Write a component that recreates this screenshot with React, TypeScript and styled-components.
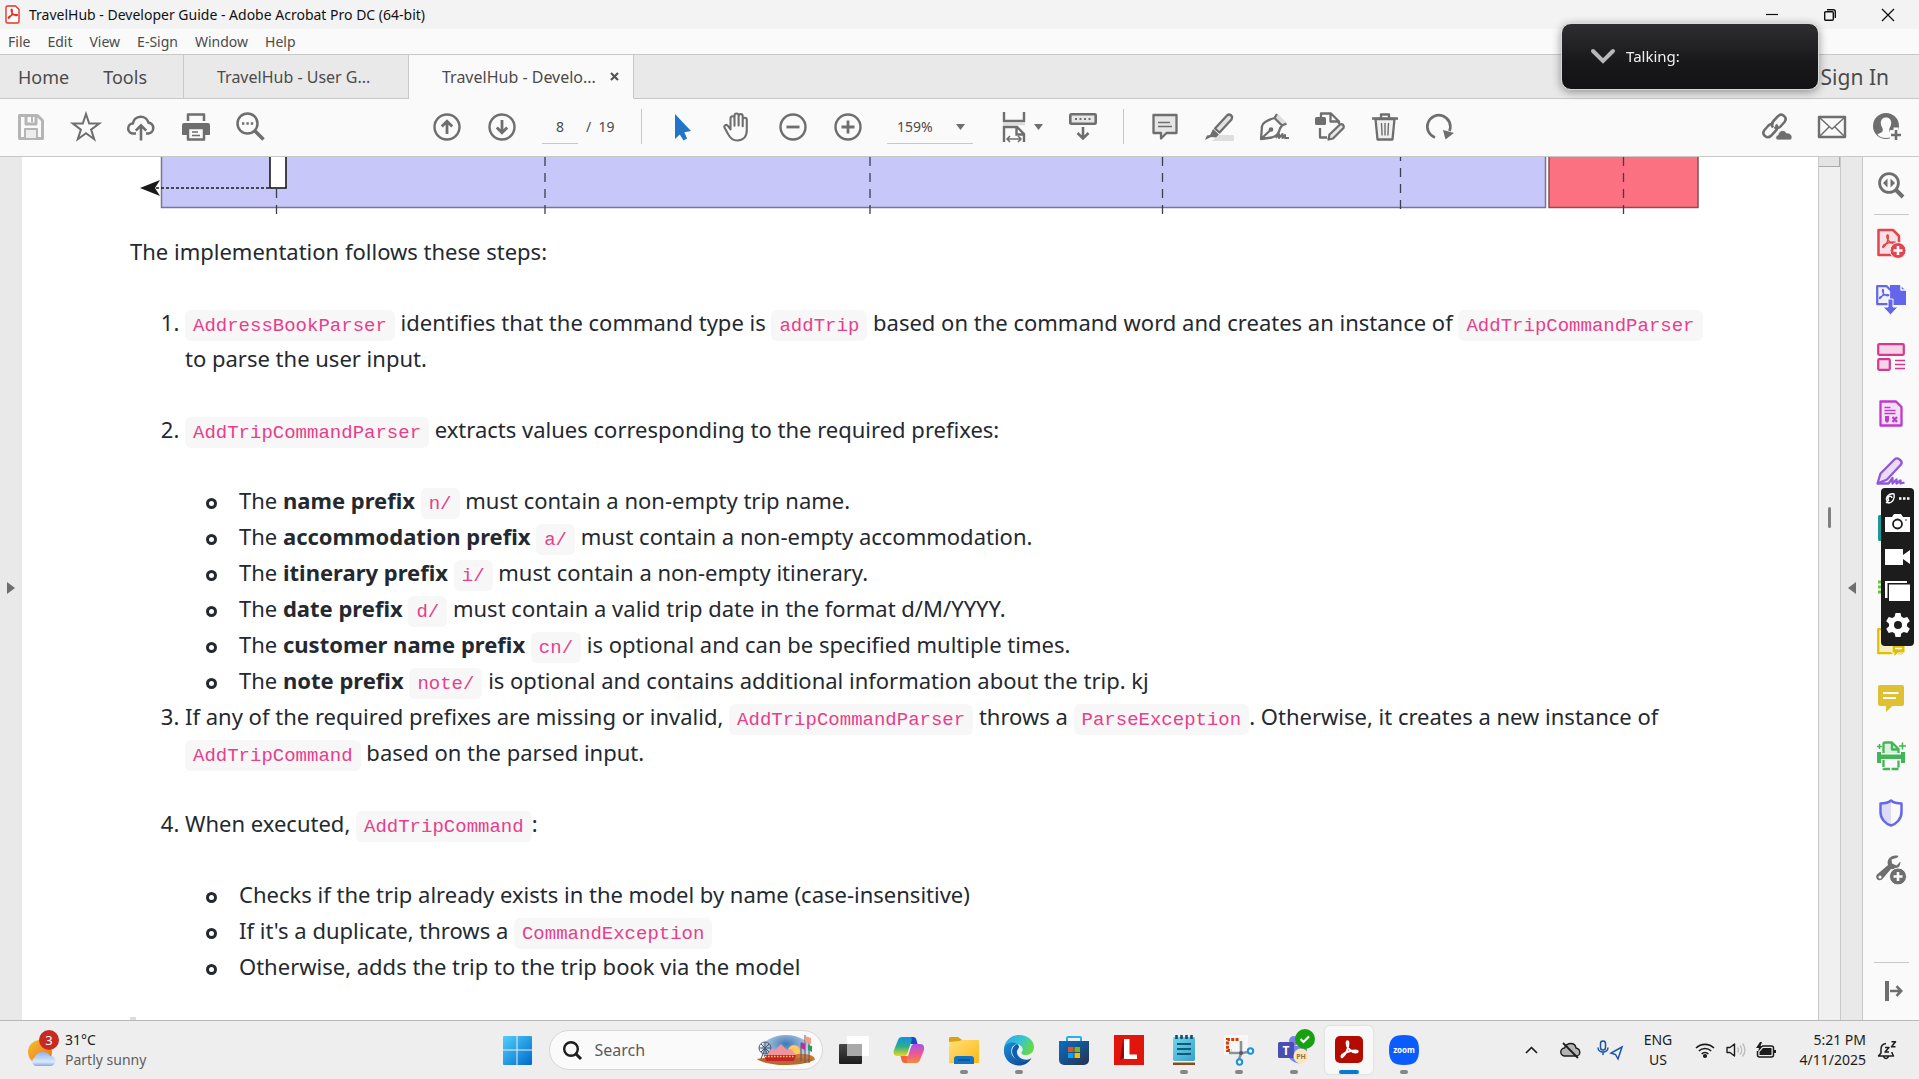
import React from 'react';
import styled, { createGlobalStyle } from 'styled-components';

const GlobalStyle = createGlobalStyle`
  *, *::before { box-sizing: border-box; }
  html, body { margin: 0; height: 100%; overflow: hidden; }
  body { font-family: 'Noto Sans', 'Open Sans', sans-serif; color: #4b4b4b; background: #fff; }
  button, input, select { font: inherit; color: inherit; border: 0; background: none; padding: 0; margin: 0; outline: 0; }
  svg { display: block; flex: none; overflow: visible; }
`;

const LINE = '#c8c8c8';
const INK = '#6e6e6e';

/* ---------- shell ---------- */
const Window = styled.div`
  display: flex;
  flex-direction: column;
  height: 100vh;
`;

const TitleBar = styled.header`
  display: flex;
  align-items: center;
  height: 29px;
  flex: none;
  padding: 0 2px 0 5px;
  gap: 9px;
  background: #f3f3f3;
  color: #111;
  font-size: 14px;
`;
const Title = styled.h1`
  flex: 1;
  margin: 0;
  font-size: 14px;
  font-weight: 400;
`;
const WindowControls = styled.div`
  display: flex;
`;
const WindowButton = styled.button`
  display: flex;
  align-items: center;
  justify-content: center;
  width: 58px;
  height: 29px;
`;

const MenuBar = styled.nav`
  display: flex;
  align-items: center;
  height: 25px;
  flex: none;
  padding-left: 8px;
  gap: 17px;
  background: #fafafa;
  font-size: 14px;
`;

const TabBar = styled.div`
  display: flex;
  height: 45px;
  flex: none;
  border-top: 1px solid ${LINE};
  background: #e9e9e9;
`;
const HomeTabs = styled.div`
  display: flex;
  align-items: center;
  width: 184px;
  padding-left: 18px;
  gap: 34px;
  font-size: 18px;
  border-right: 1px solid ${LINE};
  border-bottom: 1px solid ${LINE};
`;
const DocTab = styled.div<{ $active?: boolean }>`
  display: flex;
  align-items: center;
  gap: 14px;
  width: 225px;
  padding-left: 33px;
  font-size: 16px;
  border-right: 1px solid ${LINE};
  border-bottom: 1px solid ${p => (p.$active ? '#fafafa' : LINE)};
  background: ${p => (p.$active ? '#fafafa' : 'transparent')};
`;
const TabRest = styled.div`
  display: flex;
  flex: 1;
  align-items: center;
  justify-content: flex-end;
  padding-right: 30px;
  font-size: 21px;
  border-bottom: 1px solid ${LINE};
`;

const ToolBar = styled.div`
  display: flex;
  align-items: center;
  height: 58px;
  flex: none;
  padding: 0 5px 2px 3px;
  background: #fafafa;
  border-bottom: 1px solid ${LINE};
  font-size: 14px;
`;
const ToolButton = styled.button<{ $wide?: boolean }>`
  display: flex;
  align-items: center;
  justify-content: center;
  gap: 8px;
  width: ${p => (p.$wide ? 66 : 55)}px;
  height: 54px;
  color: ${INK};
`;
const ToolSpace = styled.div<{ $grow: number }>`
  flex: ${p => p.$grow};
`;
const Separator = styled.div`
  width: 1px;
  height: 35px;
  margin: 0 13px;
  background: ${LINE};
`;
const PageField = styled.label`
  display: flex;
  align-items: center;
  gap: 8px;
  margin-left: 13px;
  width: 86px;
`;
const PageInput = styled.input`
  width: 36px;
  height: 35px;
  text-align: center;
  border-bottom: 1px solid ${LINE};
`;
const ZoomField = styled.label`
  position: relative;
  margin: 0 16px 0 12px;
`;
const ZoomSelect = styled.select`
  appearance: none;
  width: 86px;
  height: 35px;
  padding-left: 10px;
  border-bottom: 1px solid ${LINE};
  border-radius: 0;
`;
const CaretOver = styled.span`
  position: absolute;
  right: 8px;
  top: 15px;
`;

/* ---------- document ---------- */
const Body = styled.div`
  position: relative;
  display: flex;
  flex: 1;
  min-height: 0;
`;
const EdgeStrip = styled.button<{ $left?: boolean }>`
  display: flex;
  align-items: center;
  justify-content: center;
  width: 22px;
  background: #e9e9e9;
  border-left: ${p => (p.$left ? 0 : 1)}px solid ${LINE};
  color: ${INK};
  padding-bottom: 2px;
`;
const Page = styled.main`
  flex: 1;
  min-width: 0;
  overflow: hidden;
  background: #fff;
  color: #24292f;
  font-size: 22px;
  line-height: 36px;
`;
const Diagram = styled.svg`
  margin-left: 116px;
`;
const Prose = styled.article`
  padding: 19px 100px 0 108px;
  p { margin: 0; }
`;
const Steps = styled.ol`
  margin: 0;
  padding-left: 55px;
  list-style: decimal;
`;
const Step = styled.li<{ $tight?: boolean }>`
  margin-top: ${p => (p.$tight ? 0 : 35)}px;
`;
const SubList = styled.ul`
  margin: 35px 0 0;
  padding-left: 54px;
  list-style: none;
`;
const SubItem = styled.li`
  &::before {
    content: '';
    display: inline-block;
    width: 11px;
    height: 11px;
    margin: 0 22px 0 -33px;
    border: 3px solid #24292f;
    border-radius: 50%;
  }
`;
const Code = styled.code`
  padding: 5px 8px 4px;
  border-radius: 6px;
  background: #f7f7f7;
  color: #e83e8c;
  font-family: 'Liberation Mono', monospace;
  font-size: 19px;
  line-height: 1;
`;
const NextMark = styled.div`
  width: 6px;
  height: 3px;
  margin-top: 33px;
  background: #dcdcdc;
`;
const ScrollBar = styled.div`
  display: flex;
  flex-direction: column;
  align-items: center;
  width: 22px;
  background: #f0f0f0;
  border-left: 1px solid ${LINE};
`;
const ScrollThumb = styled.div`
  align-self: stretch;
  height: 10px;
  background: #e4e4e4;
  border-right: 1px solid #aaa;
  border-bottom: 1px solid #aaa;
`;
const ScrollGrip = styled.div`
  width: 3px;
  height: 21px;
  margin-top: 340px;
  border-radius: 2px;
  background: #808080;
`;
const SideBar = styled.aside`
  display: flex;
  flex-direction: column;
  align-items: center;
  width: 57px;
  background: #fafafa;
  border-left: 1px solid ${LINE};
`;
const SideButton = styled.button`
  display: flex;
  align-items: center;
  justify-content: center;
  width: 56px;
  height: 57px;
  flex: none;
  padding-bottom: 2px;
  color: ${INK};
`;
const SideRule = styled.div<{ $push?: boolean }>`
  width: 35px;
  height: 1px;
  margin-top: ${p => (p.$push ? 'auto' : 0)};
  background: ${LINE};
`;

/* ---------- floating windows ---------- */
const Recorder = styled.div`
  position: absolute;
  top: 331px;
  right: 5px;
  width: 33px;
  height: 158px;
  display: flex;
  flex-direction: column;
  align-items: center;
  gap: 2px;
  padding-top: 3px;
  border-radius: 4px;
  background: #1c1c1c;
  color: #fff;
`;
const RecorderButton = styled.button<{ $small?: boolean }>`
  display: flex;
  align-items: center;
  justify-content: center;
  width: 33px;
  height: ${p => (p.$small ? 14 : 32)}px;
`;
const Talking = styled.div`
  position: fixed;
  top: 23px;
  right: 100px;
  display: flex;
  align-items: center;
  gap: 11px;
  width: 258px;
  height: 67px;
  padding: 0 0 1px 29px;
  border: 1px solid #d8d8d8;
  border-radius: 10px;
  background: linear-gradient(#2e2e30, #18181a 60%, #131315);
  box-shadow: 0 2px 10px rgba(0, 0, 0, 0.4);
  color: #eee;
  font-size: 15px;
`;

/* ---------- taskbar ---------- */
const TaskBar = styled.footer`
  display: grid;
  grid-template-columns: 1fr auto 1fr;
  align-items: center;
  height: 59px;
  flex: none;
  padding-left: 2px;
  border-top: 1px solid #b8b8b8;
  background: #eee;
  color: #1c1c1c;
  font-size: 14px;
  line-height: 20px;
`;
const Weather = styled.button`
  display: flex;
  align-items: center;
  gap: 6px;
  padding-left: 26px;
  text-align: left;
  small { display: block; font-size: 14px; color: #5e5e5e; }
`;
const Apps = styled.div`
  display: flex;
  align-items: center;
  gap: 7px;
`;
const AppButton = styled.button<{ $active?: boolean }>`
  display: flex;
  flex-direction: column;
  align-items: center;
  justify-content: flex-end;
  gap: 4px;
  width: 48px;
  height: 48px;
  border-radius: 5px;
  background: ${p => (p.$active ? '#f8f8f8' : 'transparent')};
  box-shadow: ${p => (p.$active ? '0 0 1px 1px #e2e2e2' : 'none')};
`;
const Indicator = styled.span<{ $state?: 'open' | 'active' }>`
  width: ${p => (p.$state === 'active' ? 20 : 8)}px;
  height: 4px;
  border-radius: 2px;
  background: ${p => (p.$state === 'active' ? '#0a78d4' : p.$state === 'open' ? '#868686' : 'transparent')};
`;
const SearchBox = styled.label`
  display: flex;
  align-items: center;
  gap: 13px;
  width: 274px;
  height: 40px;
  padding: 0 7px 0 13px;
  border: 1px solid #d6d6d6;
  border-radius: 20px;
  background: #fafafa;
`;
const SearchInput = styled.input`
  flex: 1;
  min-width: 0;
  font-size: 16px;
  &::placeholder { color: #5a5a5a; opacity: 1; }
`;
const Tray = styled.div`
  display: flex;
  align-items: center;
  justify-content: flex-end;
  padding-right: 22px;
`;
const TrayButton = styled.button<{ $w: number; $align?: 'right' }>`
  display: flex;
  flex-direction: column;
  align-items: ${p => (p.$align ? 'flex-end' : 'center')};
  width: ${p => p.$w}px;
`;

/* ---------- icons ---------- */
type IconProps = { w: number; h?: number; sw?: number; color?: string; fill?: string; children: React.ReactNode };
const Icon = ({ w, h = w, sw = 2, color = 'currentColor', fill = 'none', children }: IconProps) => (
  <svg width={w} height={h} viewBox={`0 0 ${w} ${h}`} fill={fill} stroke={color} strokeWidth={sw} strokeLinejoin="round" aria-hidden="true">
    {children}
  </svg>
);
const Caret = () => <Icon w={9} h={6} sw={0} fill={INK}><path d="M0 0h9L4.500 6z" /></Icon>;
const ACRO = 'M7.500 21C10 19 13 13 13 8c0-3-2-3-2 0 0 4 5 9 9 9 3 0 3-2 0-2-4 0-10 2-13 4-2 2-1 4 .5 2z';

const SaveIcon = () => (
  <Icon w={28} color="#b5b5b5" sw={3}>
    <path d="M2.500 2.500h18l5 5v18h-23z" /><path d="M9 3v8h10V3" /><path d="M15 4v5" strokeWidth="2" /><path d="M8 25v-9h12v9" fill="#ececec" strokeWidth="2" />
  </Icon>
);
const StarIcon = () => <Icon w={30}><path d="M15 2l3.200 9.600h10l-8.100 6 3.100 9.600L15 21.300 6.800 27.200l3.100-9.600-8.100-6h10z" strokeLinejoin="miter" /></Icon>;
const UploadIcon = () => (
  <Icon w={28} sw={2.600}><path d="M9 20.500H6.500a5 5 0 0 1-.6-10A8 8 0 0 1 21.500 9.600a5.500 5.500 0 0 1 0 10.900H19" /><path d="M14 27.500V12.500M8.800 17.600l5.200-5.200 5.200 5.200" strokeLinejoin="miter" /></Icon>
);
const PrintIcon = () => (
  <Icon w={28}>
    <path d="M6 8V1.500h16V8" strokeWidth="2.500" /><path d="M2 10h24a2 2 0 0 1 2 2v10H0V12a2 2 0 0 1 2-2z" fill={INK} stroke="none" /><path d="M6 15h16v11.500H6z" fill="#fafafa" strokeWidth="2.500" /><path d="M10 19h6M10 22.500h8" strokeWidth="1.500" />
  </Icon>
);
const FindIcon = () => (
  <Icon w={29} sw={2.500}><circle cx="11.500" cy="11.500" r="10" /><path d="M19 19l8.500 8.500" strokeWidth="3.500" /><path d="M6 11.500h2.400M10.400 11.500h2.400M14.800 11.500h2.400" strokeWidth="2.400" /></Icon>
);
const Round = ({ d }: { d: string }) => <Icon w={28} sw={2.400}><circle cx="14" cy="14" r="12.500" /><path d={d} strokeWidth="2.800" strokeLinejoin="miter" /></Icon>;
const PointerIcon = () => <Icon w={16} h={26} sw={0} fill="#2174c8"><path d="M0 0v25l4.800-4.500 3.700 6 3.600-2-2.800-6.300 6.700-1.200z" /></Icon>;
const HandIcon = () => (
  <Icon w={29} h={30} sw={2.100}>
    <path d="M7.500 17.500V6.200a2 2 0 0 1 4 0v7.500V3.500a2 2 0 0 1 4.100 0v10V4.200a2 2 0 0 1 4.100 0v10V7.800a2 2 0 0 1 4.100 0V18c0 7-4 10.500-9.500 10.500-5 0-7.300-2.400-9.300-6.600L1.500 15.500c-.8-2.200 2-3.600 3.500-1.500z" />
  </Icon>
);
const FitIcon = () => (
  <Icon w={24} h={30} sw={2.400}>
    <path d="M2 0v9h20V0" strokeLinejoin="miter" /><path d="M1 12h22" stroke="#dcdcdc" /><path d="M2 30V15h13l7 7v8M14.500 15v7.500H22" strokeLinejoin="miter" /><path d="M5 27h14M8 24l-3 3 3 3M16 24l3 3-3 3" strokeWidth="1.600" />
  </Icon>
);
const KeysIcon = () => (
  <Icon w={28} h={27} sw={2.600}><rect x="1.300" y="1.300" width="25.400" height="9.400" rx="1" fill="#e6e6e6" /><path d="M6 6h2M10.500 6h2M15 6h2M19.500 6h2" strokeWidth="2" /><path d="M14 14v11M8.500 20l5.500 5.500 5.500-5.500" strokeLinejoin="miter" /></Icon>
);
const NoteIcon = () => (
  <Icon w={26} h={27} sw={2.300}><path d="M1.500 2h23v18H14.500L9 25.500V20H1.500z" fill="#e6e6e6" /><path d="M6 9.500h12M6 13.500h14" strokeWidth="1.600" /></Icon>
);
const MarkerIcon = () => (
  <Icon w={29} h={28} sw={2.300}><path d="M14 22h15v6H7z" fill="#dedede" stroke="none" /><path d="M10 15.500L22 2.500c2.500-2.500 6.500.5 4.500 4L14.500 19.500z" fill="#e2e2e2" /><path d="M8 16l6 5.500-3 3-5-.5-6 3 2-4.500 3-.5z" fill={INK} stroke="none" /></Icon>
);
const SignIcon = () => (
  <Icon w={29} h={28} sw={2.300}>
    <path d="M15 5l3.500-3.500L26 9l-3.500 3.500z" fill="#dedede" stroke="none" /><path d="M17 1l-2.500 4 7.500 7.500 4.500-2M14.500 5C8 7 3 9.500 2 13l-1 13 11-1.500c4-1 7-4 8-9l2-3M1 26l9-8.500" /><circle cx="11" cy="16.500" r="1.200" /><path d="M16 25l3-4v4l3.500-4v4l2.500-3v3h4" strokeWidth="2" />
  </Icon>
);
const EditPdfIcon = () => (
  <Icon w={30} h={29} sw={2.300}>
    <path d="M6 5V1.500h10l8 8V12M15.500 2v7.500H23M5 16v9.500h7" /><rect x="0" y="5" width="11" height="8" rx="1.500" fill={INK} stroke="none" /><path d="M13.500 27.500l1-5L25 12.500c2.500-1 4.500 1 3.500 3.500L18 26.500z" fill="#e6e6e6" />
  </Icon>
);
const TrashIcon = () => (
  <Icon w={26} h={28} sw={2.300}><path d="M3.500 6l2 20.500h15l2-20.500z" fill="#f0f0f0" /><path d="M0 5.500h26M9 5V1.500h8V5" /><path d="M9.500 10l.6 12.500M13 10v12.500M16.500 10l-.6 12.500" strokeWidth="1.400" /></Icon>
);
const RotateIcon = () => <Icon w={28} h={26} sw={2.700}><path d="M9 23.500A11.500 11.500 0 1 1 23.500 17" /><path d="M17 16l11 3-8.500 6.500z" fill={INK} stroke="none" /></Icon>;
const LinkIcon = () => (
  <Icon w={30} h={28} sw={2.600}>
    <path d="M11 14.500c-2-2.500-1.500-4.500.5-6.500l4.500-4.800c4-3.800 10 1.200 6.500 5.800l-4 4.500c-1.800 2-4.500 2-6 .5" /><path d="M14 11.500c2 2.500 1.500 4.500-.5 6.500L9 22.800C5 26.500-1 21.500 2.500 17l4-4.500c1.500-1.600 3.500-1.800 5-1" /><path d="M16 27c-3 0-3-4.500 0-5 .5-5 7-6 8.500-2 3-.5 6 2 5.500 5l-1 2z" fill={INK} stroke="#fafafa" strokeWidth=".8" />
  </Icon>
);
const MailIcon = () => <Icon w={28} h={22} sw={2}><rect x="1" y="1" width="26" height="20" strokeWidth="2.400" /><path d="M2 2l12 11L26 2M2 20l9.500-9.500M26 20l-9.500-9.500" strokeWidth="1.500" /></Icon>;
const UserIcon = () => (
  <Icon w={28} h={27} sw={0}>
    <circle cx="13" cy="13" r="13" fill={INK} />
    <path d="M13 4.500c3.600 0 5.500 2.700 5.200 6-.2 2.500-1.400 4-1.900 5.200-.3 2.300.2 3.300 2 4.100 1.200.5 2.500 1 3.200 1.900A12 12 0 0 1 13 25a12 12 0 0 1-8.500-3.300c.7-.9 2-1.400 3.200-1.900 1.800-.8 2.300-1.800 2-4.100-.5-1.200-1.700-2.700-1.900-5.200-.3-3.300 1.600-6 5.200-6z" fill="#fafafa" />
    <path d="M17 17h3.500v-2.500h5V17H28v10H17z" fill="#fafafa" /><path d="M23 17v10M18 22h10" stroke={INK} strokeWidth="2.600" />
  </Icon>
);

const ZoomSide = () => <Icon w={26} sw={2.800}><circle cx="11" cy="11" r="9.400" /><path d="M18 18l7 7" strokeWidth="4" /><path d="M9.500 6.500v9L5 11zM12.500 6.500v9L17 11z" fill={INK} stroke="none" /></Icon>;
const CreatePdf = () => (
  <Icon w={30} sw={2.500} color="#e3444f"><path d="M2.500 2h14.500l6 6v19H2.500z" fill="#f8e1e3" /><g transform="translate(2 2) scale(.8)"><path d={ACRO} strokeWidth="1.800" /></g><circle cx="22" cy="22.500" r="8" fill="#e3444f" stroke="#fafafa" strokeWidth="1" /><path d="M22 18v9M17.500 22.500h9" stroke="#fff" strokeWidth="2.600" /></Icon>
);
const ExportPdf = () => (
  <Icon w={30} sw={2.200} color="#6366ea"><path d="M14 0h10l6 6v14H14z" fill="#6366ea" stroke="none" /><path d="M25 0v5h5" stroke="#fafafa" strokeWidth="1.500" /><path d="M1.200 1.200h9.500l4.500 4.500v13.500h-14z" fill="#f1f1fc" /><g transform="translate(0 1) scale(.58)"><path d={ACRO} strokeWidth="2" /></g><path d="M12 14h5v8h5l-7.500 8L7 22h5z" fill="#6366ea" stroke="#fafafa" strokeWidth="1" /></Icon>
);
const OrganizeIcon = () => (
  <Icon w={28} color="#d83790" sw={2.200}><rect x="1.200" y="1.200" width="25.600" height="10.600" rx="1" fill="#f4d4e6" /><rect x="1.200" y="16.200" width="11.600" height="10.600" rx="1" fill="#f4d4e6" /><path d="M18 17.500h10M18 21.500h10M18 25.500h10" strokeWidth="1.300" /></Icon>
);
const RedactIcon = () => (
  <Icon w={24} h={27} color="#c038cc" sw={2.300}><path d="M1.500 1.500h15.500l5.500 5.500v18.500h-21z" fill="#f4e0f6" /><path d="M5.500 7.500h6M5.500 10.500h11M5.500 13.500h11" strokeWidth="1.400" /><path d="M6 16h4v5l-2 2-2-2z" fill="#c038cc" stroke="none" /><path d="M13.500 17l4.500 5M18 17l-4.500 5" /></Icon>
);
const FillSign = () => (
  <Icon w={30} h={28} color="#9256d9" sw={2.300}><path d="M4.500 16.500L18.500 2.500c3-3 9 1.500 6.500 5L11 22.500 1.500 26.500z" fill="#e9dcf7" /><path d="M1.500 26.500h11l4-5.500v5.500l4-4v4l4-3v3l4-1" /></Icon>
);
const TealIcon = () => <Icon w={26} color="#189a9a" sw={3}><rect x="1.500" y="1.500" width="23" height="23" fill="#d7efef" /></Icon>;
const LimeIcon = () => <Icon w={26} color="#6cc42e" sw={3}><path d="M5 0v26M0 10h6M0 15h6M0 20h6" /></Icon>;
const SendNote = () => (
  <Icon w={28} color="#dfc000" sw={2.200}><path d="M1.200 1.200h24v24h-24z" fill="#f6ecc4" /><path d="M15 13h13v12h-7l-4 4v-4h-2z" fill="#dfc000" stroke="#fafafa" strokeWidth="1" /><path d="M18 20.500h7" stroke="#fff" strokeWidth="1.500" /></Icon>
);
const CommentSide = () => <Icon w={26} h={27} sw={0}><path d="M2 0h22a2 2 0 0 1 2 2v17a2 2 0 0 1-2 2H14.500L8 27v-6H2a2 2 0 0 1-2-2V2a2 2 0 0 1 2-2z" fill="#dfc033" /><path d="M5 8h15.500M5 13h13" stroke="#fff" strokeWidth="2.200" /></Icon>;
const ScanIcon = () => (
  <Icon w={28} h={30} color="#44b556" sw={2.300}><path d="M6.500 12V3c0-1 .5-1.500 1.500-1.500h7l6.500 6.500v4" fill="#d8f0dc" /><path d="M15 2v6.500h6" /><path d="M0 11h4v2.500h20V11h4v11h-4v-4H4v4H0z" fill="#44b556" stroke="none" /><path d="M6.500 19v9h15v-9" strokeDasharray="7 1.500" /><path d="M2.500 3v5M0 5.500h5M25.500 1.500v7M22 5h7" strokeWidth="1.500" /></Icon>
);
const ShieldIcon = () => <Icon w={24} h={28} color="#6568ea" sw={2.500}><path d="M12 2v24C5 23 2 18 2 12V5c4 0 7-1 10-3z" fill="#dcdcf6" stroke="none" /><path d="M12 1.500C9 4 5 4.500 1.500 4.500V13c0 7 5 12 10.500 13.500C17.500 25 22.500 20 22.500 13V4.500C19 4.500 15 4 12 1.500z" /></Icon>;
const MoreTools = () => (
  <Icon w={30} sw={0}>
    <path d="M22.500 1C16-1 10 4 12 10L1 19.500C-1.500 23 2.500 27 6 24.500L15 14c5 1.500 9.500-1.500 9.500-7.500l-4 4-4.500-2-.5-4 6-2zM4 20.500a1.600 1.600 0 1 1 0 3.200 1.600 1.600 0 0 1 0-3.200z" fill={INK} fillRule="evenodd" /><circle cx="22" cy="21.500" r="8.500" fill={INK} stroke="#fafafa" strokeWidth="1" /><path d="M22 17v9M17.500 21.500h9" stroke="#fafafa" strokeWidth="2.600" />
  </Icon>
);
const OpenPane = () => <Icon w={24} h={20} sw={2.600}><path d="M8 0v20" strokeWidth="4" /><path d="M11 10h11M17.500 5.200L22.200 10l-4.700 4.800" strokeLinejoin="miter" /></Icon>;

/* ---------- content ---------- */
const menus = ['File', 'Edit', 'View', 'E-Sign', 'Window', 'Help'];
const sideTools: [string, React.ReactNode][] = [
  ['Create PDF', <CreatePdf />], ['Export PDF', <ExportPdf />], ['Organize Pages', <OrganizeIcon />], ['Redact', <RedactIcon />],
  ['Fill & Sign', <FillSign />], ['Edit PDF', <TealIcon />], ['Compress', <LimeIcon />], ['Send for Comments', <SendNote />],
  ['Comment', <CommentSide />], ['Scan & OCR', <ScanIcon />], ['Protect', <ShieldIcon />], ['More Tools', <MoreTools />],
];
const prefixes: [string, string, string][] = [
  ['name prefix', 'n/', 'must contain a non-empty trip name.'],
  ['accommodation prefix', 'a/', 'must contain a non-empty accommodation.'],
  ['itinerary prefix', 'i/', 'must contain a non-empty itinerary.'],
  ['date prefix', 'd/', 'must contain a valid trip date in the format d/M/YYYY.'],
  ['customer name prefix', 'cn/', 'is optional and can be specified multiple times.'],
  ['note prefix', 'note/', 'is optional and contains additional information about the trip. kj'],
];

const SequenceDiagram = () => (
  <Diagram width="1562" height="57" viewBox="138 0 1562 57" fill="none" aria-hidden="true">
    <path d="M161.500 -2V50.500H1545.500V-2" fill="#c8c7fa" stroke="#77768f" strokeWidth="1.500" />
    <path d="M1549 -2V50.500H1698V-2" fill="#fb7181" stroke="#8c4d56" strokeWidth="1.500" />
    <g stroke="#3e3d50" strokeWidth="1.300" strokeDasharray="9 7">
      <path d="M545 0V57M870 0V57M1162.500 0V57M1623.500 0V57" /><path d="M1400.500 -5V53" /><path d="M276.500 32V57" />
    </g>
    <rect x="270" y="-4" width="16" height="35" fill="#fff" stroke="#1a1a1a" strokeWidth="1.600" />
    <path d="M156 31H270" stroke="#1a1a1a" strokeWidth="1.600" strokeDasharray="3 2" />
    <path d="M140 31l20-8-5 8 5 8z" fill="#1a1a1a" />
  </Diagram>
);

const WeatherArt = () => (
  <svg width="31" height="38" viewBox="0 0 31 38" aria-hidden="true">
    <defs>
      <linearGradient id="sun" x1="0" y1="0" x2="1" y2="1"><stop offset="0" stopColor="#f2c230" /><stop offset="1" stopColor="#ef6c12" /></linearGradient>
      <linearGradient id="cloud" x1="0" y1="0" x2="0" y2="1"><stop offset="0" stopColor="#8fb2f0" /><stop offset=".7" stopColor="#dbe9fb" /><stop offset="1" stopColor="#86a8ea" /></linearGradient>
    </defs>
    <circle cx="12" cy="21" r="12" fill="url(#sun)" />
    <path d="M7 35a5 5 0 0 1 0-9c1-6 13-7 15-1 7-1 7 10 0 10z" fill="url(#cloud)" />
    <circle cx="21" cy="9" r="10" fill="#c62a20" />
    <text x="21" y="14" textAnchor="middle" fontSize="13" fill="#fff">3</text>
  </svg>
);

const Carnival = () => (
  <svg width="58" height="30" viewBox="0 0 58 30" aria-hidden="true">
    <defs>
      <radialGradient id="sky" cx=".5" cy=".3" r=".7"><stop offset="0" stopColor="#3f78b4" /><stop offset=".6" stopColor="#a9c6e2" /><stop offset="1" stopColor="#fafafa" /></radialGradient>
    </defs>
    <ellipse cx="29" cy="15" rx="25" ry="15" fill="url(#sky)" />
    <circle cx="37" cy="16" r="6" fill="#ffc95c" />
    <path d="M30 24c7-6 19-7 27-2l1 3-10 3H30z" fill="#c77a38" />
    <path d="M0 24c6-2 46-2 56 1-4 4-20 5-28 5S4 28 0 24z" fill="#b8692e" />
    <g stroke="#4a5a70" strokeWidth="1" fill="none"><circle cx="8" cy="13" r="6" /><path d="M2 13h12M8 7v12M4 9l8 8M12 9l-8 8M8 13l-4 11M8 13l4 11" /></g>
    <path d="M10 20l4-6 4 1 6-6 6 6 4-1 5 6z" fill="#f2929c" /><path d="M7 20h32l-2 6H9z" fill="#c8222c" /><path d="M8 21.500h30" stroke="#ffcf5a" strokeWidth="1.500" strokeDasharray="1.500 1.500" />
    <path d="M48 0v28M52 8v20M44 8v18" stroke="#6a5060" strokeWidth="1" /><path d="M48 1l6 2v6l-6-2z" fill="#f0a07c" /><path d="M44 7l4 2v6l-4-2z" fill="#c52b9a" /><path d="M51 10l4 1v6l-4-2z" fill="#2a9a68" />
  </svg>
);

const art: Record<string, React.ReactNode> = {
  Start: (
    <><defs><linearGradient id="win" x1="0" y1="0" x2="1" y2="1"><stop offset="0" stopColor="#4fd0fa" /><stop offset="1" stopColor="#0069cc" /></linearGradient></defs>
      <path d="M2 1h12.500v13.500H1V2a1 1 0 0 1 1-1zM15.500 1H29a1 1 0 0 1 1 1v12.500H15.500zM1 15.500h13.500V30H2a1 1 0 0 1-1-1zM15.500 15.500H30V29a1 1 0 0 1-1 1H15.500z" fill="url(#win)" /></>
  ),
  'Task View': (
    <><defs><linearGradient id="tv" x1="0" y1="0" x2="0" y2="1"><stop offset="0" stopColor="#484848" /><stop offset="1" stopColor="#1c1c1c" /></linearGradient></defs>
      <rect x="1" y="9" width="23" height="20" rx="1" fill="url(#tv)" /><rect x="9" y="1" width="22" height="20" rx="1" fill="#fff" /><path d="M9 9h15v12H9z" fill="#a9a9a9" /></>
  ),
  Copilot: (
    <><defs>
      <linearGradient id="cpa" x1="0" y1="0" x2="0" y2="1"><stop offset="0" stopColor="#118fe8" /><stop offset=".5" stopColor="#2dae8a" /><stop offset="1" stopColor="#e8d91c" /></linearGradient>
      <linearGradient id="cpb" x1="0" y1="0" x2="0" y2="1"><stop offset="0" stopColor="#a455ee" /><stop offset=".5" stopColor="#ee5696" /><stop offset="1" stopColor="#f58a3c" /></linearGradient></defs>
      <path d="M15 2h5c2 0 3 1 3.500 3l1 4h-7z" fill="#1c48c8" /><path d="M9 2h8c2 0 2 2 1.500 4l-4 12c-.7 2.500-2 3-4 3H4c-3 0-4-3-3-6L5 5c.7-2 2-3 4-3z" fill="url(#cpa)" />
      <path d="M17 28h-5c-2 0-3-1-3.500-3l-1-4h7z" fill="#f2663c" /><path d="M23 28h-7c-2 0-2.500-2-2-4l4-12c.7-2.500 2-3 4-3h5c4 0 4.500 3 4 6l-4 10c-.7 2-2 3-4 3z" fill="url(#cpb)" /></>
  ),
  Explorer: (
    <><defs><linearGradient id="fold" x1="0" y1="0" x2="1" y2="1"><stop offset="0" stopColor="#ffe07a" /><stop offset="1" stopColor="#fdb813" /></linearGradient></defs>
      <path d="M2 2h8l4 3-3 4H1V3z" fill="#dca010" /><path d="M1 7l10-1 3-1h16a1 1 0 0 1 1 1v22H1z" fill="url(#fold)" /><path d="M6 29v-5a3 3 0 0 1 3-3h14a3 3 0 0 1 3 3v5z" fill="#1173c4" /><path d="M10 25h12" stroke="#0b4f90" strokeWidth="1.500" /></>
  ),
  Edge: (
    <><defs>
      <linearGradient id="edg" x1="0" y1="0" x2="1" y2=".4"><stop offset="0" stopColor="#2aa4e8" /><stop offset=".6" stopColor="#36c6d0" /><stop offset="1" stopColor="#62d94a" /></linearGradient>
      <linearGradient id="edb" x1="0" y1="0" x2="1" y2="1"><stop offset="0" stopColor="#1b8edb" /><stop offset="1" stopColor="#103e88" /></linearGradient></defs>
      <path d="M1 15C1 6 8 0 16 0c9 0 15 6 15 12 0 5-4 8-8 8-3 0-5-1-4.500-2.500C22 13 17 9 12 9 7 9 2 11 1 15z" fill="url(#edg)" />
      <path d="M1 14c1-6 8-8 13-5-5 1-7 6-5 11 2 4 8 7 13 6 3-.5 5-2 6.500-3C26 28 21 30.500 16 30.500 7 30.500 0 23 1 14z" fill="url(#edb)" />
      <path d="M14 9c-6 3-6 9-3 13 3 5 10 7 17 2-9 3-15-3-14-8 .5-2 2-3 2-4s-1-2.500-2-3z" fill="#0d5fae" /></>
  ),
  Store: (
    <><defs><linearGradient id="sto" x1="0" y1="0" x2="1" y2="1"><stop offset="0" stopColor="#0a6fc4" /><stop offset="1" stopColor="#26324e" /></linearGradient></defs>
      <path d="M9 7V3a1 1 0 0 1 1-1h12a1 1 0 0 1 1 1v4" fill="none" stroke="#27b0ee" strokeWidth="2" /><path d="M1 6h30v19a5 5 0 0 1-5 5H6a5 5 0 0 1-5-5z" fill="url(#sto)" />
      <path d="M10 12h5.500v5H10z" fill="#f25022" /><path d="M16.500 12H22v5h-5.500z" fill="#7fba00" /><path d="M10 18h5.500v5H10z" fill="#00a4ef" /><path d="M16.500 18H22v5h-5.500z" fill="#ffb900" /></>
  ),
  Lexis: (
    <><path d="M1 0h30v30H1z" fill="#e2150d" /><path d="M10 4L7 25l5-3z" fill="#8e0c08" /><path d="M11 4h5.500v15.500H24V24H11z" fill="#fff" /></>
  ),
  Notepad: (
    <><defs><linearGradient id="ntp" x1="0" y1="0" x2="1" y2="1"><stop offset="0" stopColor="#6fd6ea" /><stop offset="1" stopColor="#3ba2c8" /></linearGradient></defs>
      <path d="M5 25h22v5H5z" fill="#8a4b14" /><path d="M5 25h22v2.500H5z" fill="#fff" /><rect x="5" y="2" width="22" height="24" rx="1.500" fill="url(#ntp)" /><path d="M9 9h14M9 14h14M9 19h14" stroke="#0c5a7c" strokeWidth="1.800" /><path d="M8.500 0v4M13.500 0v4M18.500 0v4M23.500 0v4" stroke="#0d4f6e" strokeWidth="2.600" /></>
  ),
  'Snipping Tool': (
    <><path d="M1 0h24v20H1z" fill="#f7f7f7" /><path d="M15.500 4.500h-11v11h4" fill="none" stroke="#d83b01" strokeWidth="3" strokeDasharray="3 1.300" /><path d="M18 6v13l-2 5M6 18h14l5-1" fill="none" stroke="#8a9299" strokeWidth="2.600" /><circle cx="18" cy="18" r="2" fill="#555c63" /><circle cx="27.500" cy="16" r="2.700" fill="#fff" stroke="#1893d6" strokeWidth="2" /><circle cx="16.500" cy="27" r="2.700" fill="#fff" stroke="#1893d6" strokeWidth="2" /></>
  ),
  Teams: (
    <><circle cx="16" cy="6" r="5" fill="#7b83eb" /><path d="M9 11h20v8c0 7-5 10-10 9S9 22 9 19z" fill="#7b83eb" /><rect x="0" y="7" width="16" height="16" rx="1.500" fill="#484fb0" /><text x="8" y="19.500" textAnchor="middle" fontSize="12" fontWeight="700" fill="#fff">T</text>
      <circle cx="23" cy="21" r="7.500" fill="#f9e6bd" /><text x="23" y="24" textAnchor="middle" fontSize="7" fontWeight="700" fill="#93733a">PH</text><circle cx="27" cy="4" r="10" fill="#17a010" /><path d="M22.500 4l3 3 5.500-5.500" fill="none" stroke="#fff" strokeWidth="2.200" /></>
  ),
  Acrobat: (
    <><rect x="2" y="1" width="28" height="27" rx="5" fill="#b30b00" /><g transform="translate(2.500 .5)"><path d={ACRO} fill="none" stroke="#fff" strokeWidth="1.800" /></g></>
  ),
  Zoom: (
    <><path d="M16 0c11 0 15 4 15 15s-4 15-15 15S1 26 1 15 5 0 16 0z" fill="#0b5cff" /><text x="16" y="17.500" textAnchor="middle" fontSize="8" fontWeight="700" fill="#fff">zoom</text></>
  ),
};
const apps: [string, 'open' | 'active' | undefined][] = [
  ['Task View', undefined], ['Copilot', undefined], ['Explorer', 'open'], ['Edge', 'open'], ['Store', undefined], ['Lexis', undefined],
  ['Notepad', 'open'], ['Snipping Tool', 'open'], ['Teams', 'open'], ['Acrobat', 'active'], ['Zoom', 'open'],
];
const TaskApp = ({ name, state }: { name: string; state?: 'open' | 'active' }) => (
  <AppButton aria-label={name} $active={state === 'active'}>
    <svg width="32" height="32" viewBox="0 -1 32 32" aria-hidden="true">{art[name]}</svg>
    <Indicator $state={state} />
  </AppButton>
);
const Tool = ({ name, children, wide }: { name: string; children: React.ReactNode; wide?: boolean }) => (
  <ToolButton aria-label={name} $wide={wide}>{children}</ToolButton>
);

export default function App() {
  return (
    <Window>
      <GlobalStyle />
      <TitleBar>
        <Icon w={15} h={19} color="#e5332a" sw={1.400}><path d="M1 2.500A1.500 1.500 0 0 1 2.500 1h8L14 4.500v12a1.500 1.500 0 0 1-1.500 1.500h-10A1.500 1.500 0 0 1 1 16.500z" fill="#fff" /><g transform="translate(0 1) scale(.56)"><path d={ACRO} strokeWidth="2.500" /></g></Icon>
        <Title>TravelHub - Developer Guide - Adobe Acrobat Pro DC (64-bit)</Title>
        <WindowControls>
          <WindowButton aria-label="Minimize"><Icon w={12} sw={1.200}><path d="M0 5.500h12" /></Icon></WindowButton>
          <WindowButton aria-label="Restore"><Icon w={12} sw={1.400}><rect x=".7" y="2.700" width="8.600" height="8.600" rx="1" /><path d="M3 .7h6.300a2 2 0 0 1 2 2V9" /></Icon></WindowButton>
          <WindowButton aria-label="Close"><Icon w={12} sw={1.300}><path d="M0 0l12 12M12 0L0 12" /></Icon></WindowButton>
        </WindowControls>
      </TitleBar>
      <MenuBar>{menus.map(m => <button key={m}>{m}</button>)}</MenuBar>
      <TabBar>
        <HomeTabs><button>Home</button><button>Tools</button></HomeTabs>
        <DocTab><button>TravelHub - User G...</button></DocTab>
        <DocTab $active>
          <button>TravelHub - Develo...</button>
          <button aria-label="Close tab"><Icon w={9} sw={2.200} color="#555"><path d="M1 1l7 7M8 1L1 8" /></Icon></button>
        </DocTab>
        <TabRest><button>Sign In</button></TabRest>
      </TabBar>
      <ToolBar>
        <Tool name="Save"><SaveIcon /></Tool>
        <Tool name="Star"><StarIcon /></Tool>
        <Tool name="Upload"><UploadIcon /></Tool>
        <Tool name="Print"><PrintIcon /></Tool>
        <Tool name="Find"><FindIcon /></Tool>
        <ToolSpace $grow={1} />
        <Tool name="Previous page"><Round d="M14 21V8.500M8.800 13.500L14 8.300l5.200 5.200" /></Tool>
        <Tool name="Next page"><Round d="M14 7v12.500M8.800 14.500l5.200 5.200 5.200-5.200" /></Tool>
        <PageField><PageInput aria-label="Page" defaultValue="8" /><span>/&nbsp; 19</span></PageField>
        <Separator />
        <Tool name="Select"><PointerIcon /></Tool>
        <Tool name="Pan"><HandIcon /></Tool>
        <Tool name="Zoom out"><Round d="M7.500 14h13" /></Tool>
        <Tool name="Zoom in"><Round d="M7.500 14h13M14 7.500v13" /></Tool>
        <ZoomField>
          <ZoomSelect aria-label="Zoom level"><option>159%</option></ZoomSelect>
          <CaretOver><Caret /></CaretOver>
        </ZoomField>
        <Tool name="Fit width" wide><FitIcon /><Caret /></Tool>
        <Tool name="Read mode"><KeysIcon /></Tool>
        <Separator />
        <Tool name="Comment"><NoteIcon /></Tool>
        <Tool name="Highlight"><MarkerIcon /></Tool>
        <Tool name="Sign"><SignIcon /></Tool>
        <Tool name="Edit"><EditPdfIcon /></Tool>
        <Tool name="Delete"><TrashIcon /></Tool>
        <Tool name="Rotate"><RotateIcon /></Tool>
        <ToolSpace $grow={2} />
        <Tool name="Share link"><LinkIcon /></Tool>
        <Tool name="Email"><MailIcon /></Tool>
        <Tool name="Invite"><UserIcon /></Tool>
      </ToolBar>

      <Body>
        <EdgeStrip $left aria-label="Show navigation pane"><Icon w={8} h={12} sw={0} fill={INK}><path d="M0 0l8 6-8 6z" /></Icon></EdgeStrip>
        <Page>
          <SequenceDiagram />
          <Prose>
            <p>The implementation follows these steps:</p>
            <Steps>
              <Step>
                <Code>AddressBookParser</Code> identifies that the command type is <Code>addTrip</Code> based on the command word and creates an instance of <Code>AddTripCommandParser</Code> to parse the user input.
              </Step>
              <Step>
                <Code>AddTripCommandParser</Code> extracts values corresponding to the required prefixes:
                <SubList>
                  {prefixes.map(([name, code, rest]) => (
                    <SubItem key={name}>The <b>{name}</b> <Code>{code}</Code> {rest}</SubItem>
                  ))}
                </SubList>
              </Step>
              <Step $tight>
                If any of the required prefixes are missing or invalid, <Code>AddTripCommandParser</Code> throws a <Code>ParseException</Code>. Otherwise, it creates a new instance of <Code>AddTripCommand</Code> based on the parsed input.
              </Step>
              <Step>
                When executed, <Code>AddTripCommand</Code>:
                <SubList>
                  <SubItem>Checks if the trip already exists in the model by name (case-insensitive)</SubItem>
                  <SubItem>If it's a duplicate, throws a <Code>CommandException</Code></SubItem>
                  <SubItem>Otherwise, adds the trip to the trip book via the model</SubItem>
                </SubList>
              </Step>
            </Steps>
            <NextMark />
          </Prose>
        </Page>
        <ScrollBar><ScrollThumb /><ScrollGrip /></ScrollBar>
        <EdgeStrip aria-label="Hide tools pane"><Icon w={8} h={12} sw={0} fill={INK}><path d="M8 0L0 6l8 6z" /></Icon></EdgeStrip>
        <SideBar>
          <SideButton aria-label="Search tools"><ZoomSide /></SideButton>
          <SideRule />
          {sideTools.map(([name, icon]) => <SideButton key={name} aria-label={name}>{icon}</SideButton>)}
          <SideRule $push />
          <SideButton aria-label="Expand pane"><OpenPane /></SideButton>
        </SideBar>
        <Recorder>
          <RecorderButton $small aria-label="Recorder menu">
            <Icon w={25} h={11} sw={1.400}><path d="M2 8C0 4 4 0 9 1c1 4-1 9-6 9zM4 7a2 2 0 1 1 3-2M1 10l3-3" /><path d="M14 5.500h2.500M18 5.500h2.500M22 5.500h2.500" strokeWidth="2.400" /></Icon>
          </RecorderButton>
          <RecorderButton aria-label="Screenshot"><Icon w={25} h={18} sw={0}><path d="M0 3h7l2-3h7l2 3h7v15H0z" fill="#fff" /><circle cx="12.500" cy="10" r="4.500" fill="#fff" stroke="#1c1c1c" strokeWidth="1.800" /><circle cx="21" cy="6" r=".8" fill="#1c1c1c" /></Icon></RecorderButton>
          <RecorderButton aria-label="Record video"><Icon w={25} h={16} sw={0} fill="#fff"><path d="M0 0h18v6l7-5v14l-7-5v6H0z" /></Icon></RecorderButton>
          <RecorderButton aria-label="Gallery"><Icon w={25} h={20} sw={0} fill="#fff"><path d="M0 0h22v2H2.500v15H0z" /><path d="M4 3.500h21V20H4z" /></Icon></RecorderButton>
          <RecorderButton aria-label="Settings">
            <Icon w={24} sw={0} fill="#fff"><path fillRule="evenodd" d="M9.500 0h5l.8 3.600 2.400 1.400 3.600-1.100 2.500 4.300L21 10.700v2.600l2.800 2.500-2.500 4.300-3.600-1.100-2.400 1.400-.8 3.600h-5l-.8-3.600L6.300 19l-3.600 1.100L.2 15.800 3 13.300v-2.600L.2 8.200l2.500-4.300L6.300 5l2.400-1.400zM12 8a4 4 0 1 0 0 8 4 4 0 0 0 0-8z" /></Icon>
          </RecorderButton>
        </Recorder>
      </Body>

      <TaskBar>
        <Weather><WeatherArt /><span>31°C<small>Partly sunny</small></span></Weather>
        <Apps>
          <TaskApp name="Start" />
          <SearchBox>
            <Icon w={19} sw={2.400}><circle cx="8" cy="8" r="6.800" /><path d="M13 13l5 5" strokeWidth="3" /></Icon>
            <SearchInput aria-label="Search" placeholder="Search" />
            <Carnival />
          </SearchBox>
          {apps.map(([name, state]) => <TaskApp key={name} name={name} state={state} />)}
        </Apps>
        <Tray>
          <TrayButton $w={32} aria-label="Hidden icons"><Icon w={13} h={8} sw={1.700}><path d="M1 7l5.500-5.500L12 7" /></Icon></TrayButton>
          <TrayButton $w={46} aria-label="Cloud sync"><Icon w={21} h={17} sw={1.400}><path d="M5 14a4 4 0 0 1-.5-8C7 0 15 0 16 6c5 1 5 8 0 8z" fill="#b4b4b4" /><path d="M3 1l15 15" strokeWidth="1.800" /></Icon></TrayButton>
          <TrayButton $w={34} aria-label="Microphone and location"><Icon w={26} h={20} sw={1.500} color="#1a55a8"><rect x="3.500" y="1" width="5" height="9" rx="2.500" /><path d="M1 7.500c0 6 10 6 10 0M6 12.500V15" /><path d="M25 7L14 13l4.500 1.500L21 19z" strokeLinejoin="miter" /></Icon></TrayButton>
          <TrayButton $w={62}><span>ENG</span><span>US</span></TrayButton>
          <TrayButton $w={32} aria-label="Wi-Fi"><Icon w={20} h={16} sw={1.600}><path d="M1 6a13 13 0 0 1 18 0M3.800 9a9 9 0 0 1 12.400 0M6.600 12a5 5 0 0 1 6.800 0" /><circle cx="10" cy="14" r="1.300" fill="#1c1c1c" /></Icon></TrayButton>
          <TrayButton $w={30} aria-label="Volume"><Icon w={20} h={14} sw={1.400}><path d="M1 4.500h3L8.500 1v12L4 9.500H1z" /><path d="M11.500 4.500a4 4 0 0 1 0 5M14 2.500a7 7 0 0 1 0 9M16.500 .5a10 10 0 0 1 0 13" stroke="#bdbdbd" /></Icon></TrayButton>
          <TrayButton $w={30} aria-label="Battery"><Icon w={20} h={16} sw={1.500}><path d="M6 4h9.500a2 2 0 0 1 2 2v7a2 2 0 0 1-2 2h-12a2 2 0 0 1-2-2V9" /><path d="M7 6h8.500v7h-12v-3zM18 8h2v3h-2zM4 0L0 6h3L2 10l5-6H4.500L6 0z" fill="#1c1c1c" stroke="none" /></Icon></TrayButton>
          <TrayButton $w={85} $align="right"><span>5:21 PM</span><span>4/11/2025</span></TrayButton>
          <TrayButton $w={31} $align="right" aria-label="Notifications"><Icon w={20} h={18} sw={1.500}><path d="M9 2.500C6 3 4 5 4 8v4l-2.500 3h15L15 12v-1M6.500 15.500c1 2.500 4 2.500 5 0" /><path d="M8 6.500h4L8 11h4M14.500 .8h4l-4 5h4" strokeWidth="1.500" /></Icon></TrayButton>
        </Tray>
      </TaskBar>

      <Talking>
        <Icon w={24} h={14} sw={4} color="#b8b8b8"><path d="M2 2l10 10L22 2" strokeLinecap="round" strokeLinejoin="miter" /></Icon>
        <span>Talking:</span>
      </Talking>
    </Window>
  );
}
